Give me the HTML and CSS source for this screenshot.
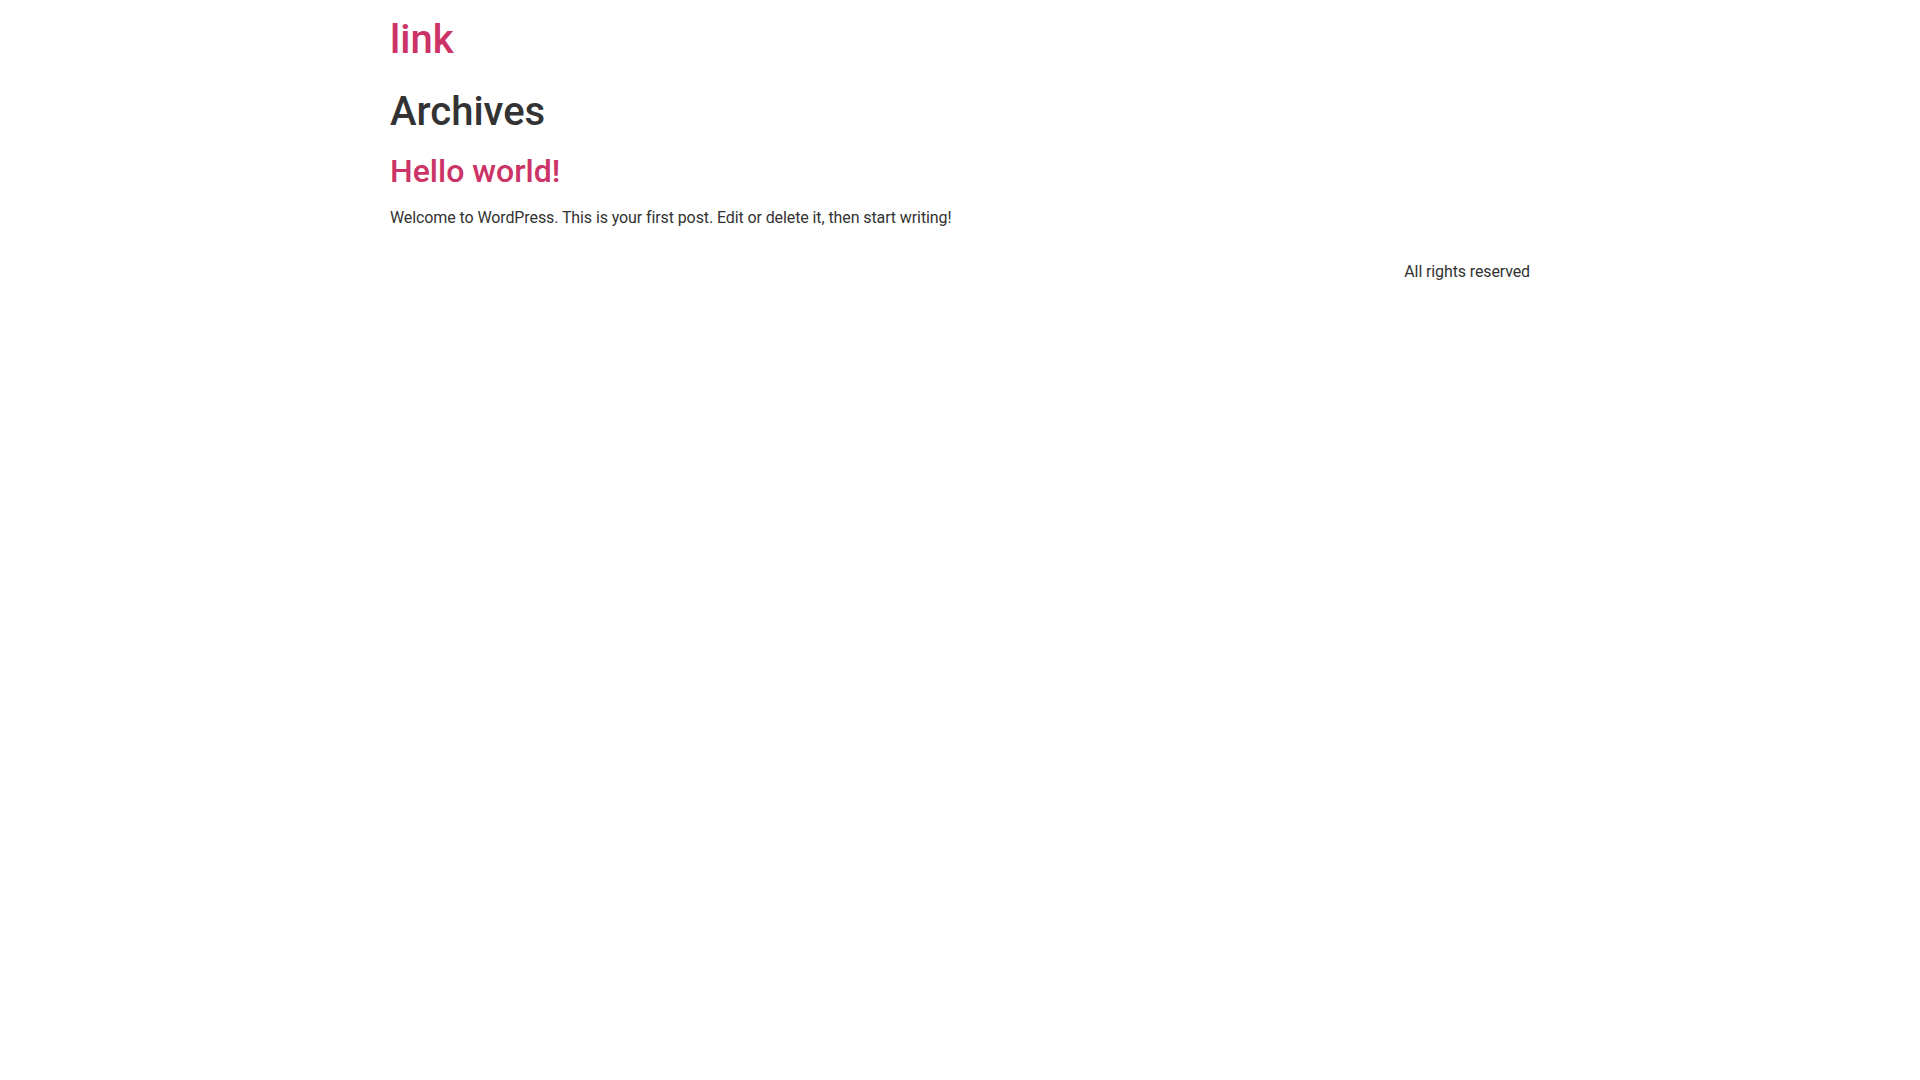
FILE: index.html
```html
<!DOCTYPE html>
<html lang="en">
<head>
<meta charset="utf-8">
<title>Archives - link</title>
<link rel="stylesheet" href="styles.css">
</head>
<body>
<header class="site-header">
  <div class="site-branding">
    <h1 class="site-title"><a href="#">link</a></h1>
  </div>
</header>
<main class="site-main">
  <header class="page-header">
    <h1 class="entry-title">Archives</h1>
  </header>
  <div class="page-content">
    <article class="post">
      <h2 class="entry-title"><a href="#">Hello world!</a></h2>
      <p>Welcome to WordPress. This is your first post. Edit or delete it, then start writing!</p>
    </article>
  </div>
</main>
<footer class="site-footer">
  <div class="copyright"><p>All rights reserved</p></div>
</footer>
</body>
</html>
```

FILE: styles.css
```css
html, body {
  margin: 0;
  padding: 0;
}
body {
  background: #fff;
  color: #333;
  font-family: Roboto, "Liberation Sans", sans-serif;
  font-size: 16px;
  line-height: 1.5;
}
a {
  color: #c36;
  text-decoration: none;
}
h1, h2 {
  font-weight: 500;
  line-height: 1.2;
  margin: 8px 0 16px;
}
h1 { font-size: 40px; }
h2 { font-size: 32px; }
p {
  margin: 0 0 14.4px;
  letter-spacing: -0.1px;
}

.site-header,
.site-main,
.site-footer {
  max-width: 1140px;
  margin: 0 auto;
}
.site-header {
  padding: 16px 0;
  display: flex;
}
.site-header .site-title {
  margin: 0;
}
.site-footer {
  display: flex;
  justify-content: flex-end;
  padding: 15px 0 16px;
}
.site-footer p {
  margin: 0;
  letter-spacing: -0.12px;
}
```
